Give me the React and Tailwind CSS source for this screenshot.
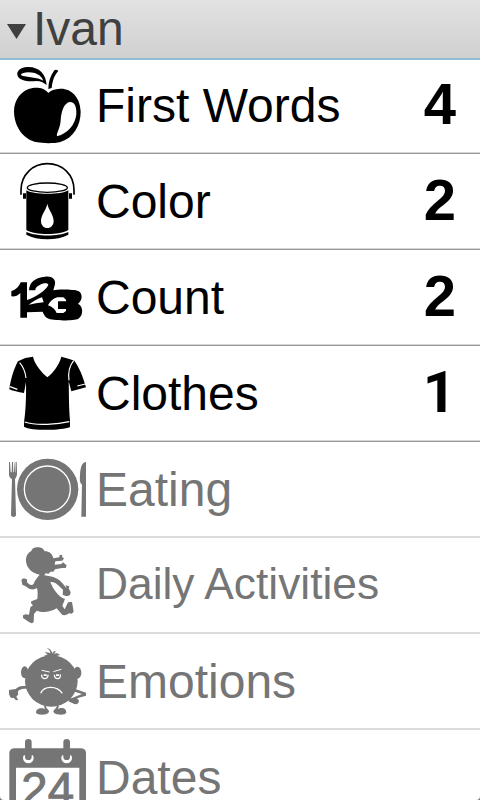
const categories = [
    { name: "First Words", icon: AppleIcon, count: 4 },
    { name: "Color", icon: PaintIcon, count: 2 },
    { name: "Count", icon: NumbersIcon, count: 2 },
    { name: "Clothes", icon: ShirtIcon, count: 1 },
    { name: "Eating", icon: PlateIcon },
    { name: "Daily Activities", icon: RunningIcon, small: true },
    { name: "Emotions", icon: AngryIcon },
    { name: "Dates", icon: CalendarIcon },
]

function Icon({ children }) {
    return (
        <svg viewBox="0 0 288 276" className="h-[92px] w-24 shrink-0" fill="currentColor">
            {children}
        </svg>
    )
}

function AppleIcon() {
    return (
        <Icon>
            <path d="M145 99 C132 83 114 82 98 84 C64 89 42 120 42 155 C43 197 67 238 112 247 C126 250 164 251 181 246 C222 233 242 195 242 155 C241 110 212 84 180 86 C163 87 153 91 145 99 Z" />
            <path d="M163 31 Q168 26 175 33 C164 45 158 59 155 84 L145 87 C145 66 151 48 163 31 Z" />
            <path d="M140 75 C138 45 120 20 82 21 C62 22 50 32 52 45 C56 62 84 66 109 63 C122 63 131 68 140 75 Z" />
            <path d="M130 62 C113 50 81 54 62 45 C66 35 89 35 104 39 C119 44 126 52 130 62 Z" fill="white" />
            <path d="M171 229 C168 221 181 205 182 181 C184 154 192 128 210 126 C226 126 230 144 229 163 C226 193 204 221 171 229 Z" fill="white" />
        </Icon>
    )
}

function PaintIcon() {
    return (
        <Icon>
            <path d="M63 122 V107 C64 62 98 29 142 29 C188 29 222 62 222 108 V122" fill="none" stroke="currentColor" strokeWidth="5" />
            <path d="M69 118 H78 V134 H69 Z M207 118 H216 V134 H207 Z" />
            <ellipse cx="142" cy="101" rx="60" ry="14" fill="none" stroke="currentColor" strokeWidth="4" />
            <path d="M79 109 C94 122 185 124 205 109 V228 C180 244 105 244 79 228 Z" />
            <path d="M79 234 C110 248 176 248 205 234 V242 C172 260 112 260 79 242 Z" />
            <path d="M142 149 C146 169 161 182 161 201 C161 214 153 222 142 222 C131 222 123 214 123 201 C123 182 138 169 142 149 Z" fill="white" />
        </Icon>
    )
}

function NumbersIcon() {
    return (
        <Icon>
            <path d="M62 97 H81 V203 H61 V129 C53 138 44 140 34 139 V123 C48 120 57 109 62 97 Z" />
            <path d="M87 121 C88 96 107 82 135 80 C155 77 168 87 165 103 L160 121 C174 117 222 118 235 123 C248 129 249 151 234 161 C251 169 250 197 235 206 C221 213 157 213 143 205 C135 201 131 193 128 185 L81 187 V150 C104 143 137 123 145 105 C146 99 130 98 119 105 C109 110 106 114 106 121 Z" />
            <path d="M86 164 C100 154 112 146 126 142 L131 157 C114 159 101 161 86 164 Z" fill="white" />
            <path d="M144 166 C149 156 158 146 172 142 H190 L198 149 V154 H174 V177 H198 V183 L190 189 H170 C165 178 157 170 144 166 Z" fill="white" />
        </Icon>
    )
}

function ShirtIcon() {
    return (
        <Icon>
            <path d="M76 36 L99 32 C105 58 126 80 142 94 C160 80 177 58 184 32 L208 39 L223 44 C237 63 248 89 258 124 L214 136 L206 106 C207 132 206 177 210 224 V243 C185 254 93 255 72 242 V229 C77 199 79 155 78 108 L72 141 C53 138 40 135 28 130 C32 98 42 68 54 46 Z" />
            <path d="M59 50 Q75 69 78 96 M221 44 Q202 67 207 103 M30 122 L52 130 M232 120 L256 114 M74 228 Q101 237 142 235 Q179 234 208 227" fill="none" stroke="white" strokeWidth="3.5" />
        </Icon>
    )
}

function PlateIcon() {
    return (
        <Icon>
            <circle cx="143" cy="142" r="92" />
            <circle cx="142" cy="141" r="69" fill="none" stroke="white" strokeWidth="4" />
            <path d="M27 60 L30 60 L32 91 H35 L36 60 H39 L40 91 H42 L44 60 H46 L47 91 H48 L49 60 H51 V97 C50 107 46 109 45 111 L48 220 Q47 225 41 225 Q34 225 33 220 L36 112 C30 108 27 104 27 96 Z" />
            <path d="M258 60 V224 H244 L246 128 C239 121 239 116 240 100 C241 75 247 60 258 60 Z" />
        </Icon>
    )
}

function RunningIcon() {
    return (
        <Icon>
            <path d="M94 39 C97 27 110 27 117 28 C127 29 132 35 134 40 C146 39 157 47 160 61 L178 58 L179 51 L187 51 L186 57 L192 61 L187 68 L166 70 L164 80 L184 78 L189 73 L195 78 L200 82 L197 90 H186 L165 94 L160 101 H151 L146 107 L137 106 L133 112 C157 116 173 119 186 134 L200 151 L197 142 L208 145 L206 151 L212 163 C211 177 201 176 188 170 L189 155 L183 150 C171 137 164 132 151 132 C160 154 174 176 195 183 L187 203 L194 214 C200 204 201 194 207 192 H216 L221 221 L215 227 L207 226 C201 232 187 235 182 225 L170 211 C148 224 126 224 110 218 L102 228 L101 253 L95 256 L87 252 L69 240 V232 L77 229 L87 230 L91 208 L99 202 L93 196 L94 190 L112 183 C113 169 114 162 111 150 C102 156 91 157 77 145 L67 140 L64 125 L71 121 L81 124 V133 C88 141 96 144 101 137 C104 128 110 120 119 110 C97 106 80 92 78 69 C77 55 84 44 94 39 Z" />
        </Icon>
    )
}

function AngryIcon() {
    return (
        <Icon>
            <ellipse cx="154" cy="141" rx="79" ry="77" />
            <ellipse cx="74" cy="115" rx="11" ry="18" />
            <ellipse cx="232" cy="116" rx="12" ry="18" />
            <path d="M131 64 L143 62 L134 54 L151 57 C150 50 146 45 139 42 C152 44 156 52 157 59 C158 53 161 50 168 52 L161 60 C167 57 174 57 180 63 L170 66 L154 70 Z" />
            <path d="M80 157 C65 154 55 157 47 165 L27 168 V180 L31 190 Q36 194 41 191 L48 199 L54 198 L49 187 L54 183 V171 C62 164 70 164 80 164 Z" />
            <path d="M224 164 L258 176 V185 L231 193 L237 200 C236 211 227 213 218 208 L205 202 L207 194 L216 192 L246 180 L219 172 Z" />
            <path d="M137 215 C139 224 144 225 147 231 C149 244 112 245 108 236 C108 226 117 221 128 223 L135 225 L131 214 Z M171 215 C169 224 163 225 160 231 C159 244 195 245 199 236 C199 226 192 220 179 223 L174 225 L177 215 Z" />
            <path d="M122 178 C132 155 170 154 187 178" fill="none" stroke="white" strokeWidth="4" />
            <path d="M125 109 L149 114 M160 113 L184 106" fill="none" stroke="white" strokeWidth="3" />
            <path d="M125 122 C123 138 145 138 144 122 M163 122 C163 138 184 138 181 121" fill="none" stroke="white" strokeWidth="4" />
            <path d="M131 121 h9 v5 h-9 Z M168 121 h9 v5 h-9 Z" fill="white" />
        </Icon>
    )
}

function CalendarIcon() {
    return (
        <Icon>
            <path d="M42 55 H244 Q258 57 258 70 V276 H28 V70 Q28 57 42 55 Z" />
            <path d="M48 113 H238 V276 H48 Z" fill="white" />
            <circle cx="85" cy="84" r="16" fill="white" />
            <circle cx="200" cy="84" r="16" fill="white" />
            <path d="M67 66 H103 V76 H67 Z M182 66 H218 V76 H182 Z" />
            <path d="M85 37 V80 M200 37 V80" stroke="currentColor" strokeWidth="20" strokeLinecap="round" />
            <text x="64" y="227" fontSize="142" fontFamily="Liberation Sans, sans-serif" stroke="currentColor" strokeWidth="3">24</text>
        </Icon>
    )
}

function CategoryRow({ category }) {
    const { name, icon: CategoryIcon, count, small } = category
    const active = count > 0

    return (
        <li className={`group flex h-24 shrink-0 items-start first:h-[94px] ${active ? "border-b border-[#999999] text-black shadow-[inset_0_-1px_0_#d6d6d6]" : "border-b-2 border-[#dcdcdc] text-[#757575]"}`}>
            <CategoryIcon />
            <span className={`grow whitespace-nowrap ${small ? "text-[44.3px] leading-[91px]" : "text-[48px] leading-[96px] group-first:leading-[92px]"}`}>{name}</span>
            {active ? (
                <span className={`pr-6 text-[58px] font-bold leading-[92px] group-first:leading-[88px] ${count === 1 ? "font-[Roboto,sans-serif]" : ""}`}>{count}</span>
            ) : null}
        </li>
    )
}

export default function App() {
    return (
        <div className="w-[480px] bg-[#777777]">
            <div className="flex h-[800px] flex-col overflow-hidden rounded-b-[4px] bg-white font-['Liberation_Sans',Arial,sans-serif]">
                <header className="flex h-[60px] shrink-0 items-center border-b-2 border-[#8fbbd3] bg-linear-to-b from-[#e2e2e2] to-[#d0d0d0] text-[#404040]">
                    <svg viewBox="0 0 19 15" className="mt-[5px] ml-[7px] h-[15px] w-[19px]" fill="currentColor">
                        <path d="M0 0 H19 L9.5 15 Z" />
                    </svg>
                    <h1 className="ml-[7px] text-[48px] leading-[58px]">Ivan</h1>
                </header>
                <ul className="flex flex-col">
                    {categories.map((category) => (
                        <CategoryRow key={category.name} category={category} />
                    ))}
                </ul>
            </div>
        </div>
    )
}
